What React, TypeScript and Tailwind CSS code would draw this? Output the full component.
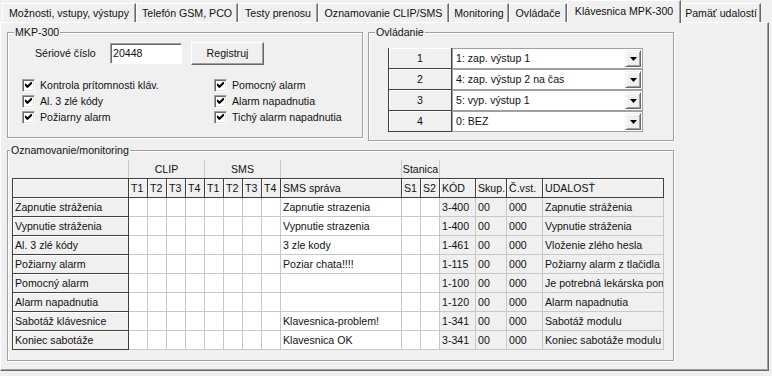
import React from "react";

const tabs = [
  { label: "Možnosti, vstupy, výstupy", w: "w-[134px]" },
  { label: "Telefón GSM, PCO", w: "w-[102px]" },
  { label: "Testy prenosu", w: "w-[80px]" },
  { label: "Oznamovanie CLIP/SMS", w: "w-[131px]" },
  { label: "Monitoring", w: "w-[60px]" },
  { label: "Ovládače", w: "w-[58px]" },
  { label: "Klávesnica MPK-300", w: "w-[114px]", active: true },
  { label: "Pamäť udalostí", w: "w-[80px]" },
];

const controls = [
  { n: "1", value: "1: zap. výstup 1" },
  { n: "2", value: "4: zap. výstup 2 na čas" },
  { n: "3", value: "5: vyp. výstup 1" },
  { n: "4", value: "0: BEZ" },
];

const headers = ["", "T1", "T2", "T3", "T4", "T1", "T2", "T3", "T4", "SMS správa", "S1", "S2", "KÓD", "Skup.", "Č.vst.", "UDALOSŤ"];

const events = [
  ["Zapnutie stráženia", "Zapnutie strazenia", "3-400", "Zapnutie stráženia"],
  ["Vypnutie stráženia", "Vypnutie strazenia", "1-400", "Vypnutie stráženia"],
  ["Al. 3 zlé kódy", "3 zle kody", "1-461", "Vloženie zlého hesla"],
  ["Požiarny alarm", "Poziar chata!!!!", "1-115", "Požiarny alarm z tlačidla"],
  ["Pomocný alarm", "", "1-100", "Je potrebná lekárska pomoc"],
  ["Alarm napadnutia", "", "1-120", "Alarm napadnutia"],
  ["Sabotáž klávesnice", "Klavesnica-problem!", "1-341", "Sabotáž modulu"],
  ["Koniec sabotáže", "Klavesnica OK", "3-341", "Koniec sabotáže modulu"],
];

function Group({ label, labelLeft, className, children }: { label: string; labelLeft: string; className: string; children: React.ReactNode }) {
  return (
    <div className={"relative border border-[#a0a0a0] shadow-[inset_1px_1px_0_#fff,1px_1px_0_#fff] " + className}>
      <span className={"absolute -top-[7px] bg-[#f0f0f0] px-[1px] leading-[13px] " + labelLeft}>{label}</span>
      {children}
    </div>
  );
}

function CheckBox({ label }: { label: string }) {
  return (
    <div className="flex h-[16px] items-center gap-[5px]">
      <span className="flex h-[13px] w-[13px] items-center justify-center border border-t-[#a0a0a0] border-l-[#a0a0a0] border-r-white border-b-white bg-white shadow-[inset_1px_1px_0_#696969,inset_-1px_-1px_0_#e3e3e3]">
        <svg width="7" height="7" viewBox="0 0 7 7">
          <polyline points="0.5,2.8 2.5,4.8 6.5,0.8" fill="none" stroke="#000" strokeWidth="2" strokeLinecap="square" />
        </svg>
      </span>
      <span>{label}</span>
    </div>
  );
}

function Combo({ value }: { value: string }) {
  return (
    <div className="flex h-[21px] w-[191px] items-center justify-between border border-[#a0a0a0] bg-white pl-[3px] pr-[1px]">
      <span>{value}</span>
      <span className="flex h-[17px] w-[16px] items-center justify-center border border-t-[#f0f0f0] border-l-[#f0f0f0] border-r-[#696969] border-b-[#696969] bg-[#f0f0f0] shadow-[inset_1px_1px_0_#fff,inset_-1px_-1px_0_#a0a0a0]">
        <svg width="7" height="4" viewBox="0 0 7 4">
          <path d="M0 0 H7 L3.5 4 Z" fill="#000" />
        </svg>
      </span>
    </div>
  );
}

export default function App() {
  const fixed = "flex items-center px-[2px] bg-[#f0f0f0] border-r border-b border-[#404040] shadow-[inset_1px_1px_0_#fff] whitespace-nowrap overflow-hidden";
  const cell = "flex items-center px-[2px] border-r border-b border-[#c8c8c8] whitespace-nowrap overflow-hidden";

  return (
    <div className="h-[376px] w-[772px] overflow-hidden bg-[#f0f0f0] font-['Liberation_Sans',Arial,sans-serif] text-[10.6px] leading-none text-[#111]">
      <div className="flex h-[22px] items-end pl-[2px]">
        {tabs.map((t) =>
          t.active ? (
            <div
              key={t.label}
              className={"relative z-10 -mb-[1px] flex h-[23px] items-center justify-center border-t border-l border-r border-t-white border-l-white border-r-[#696969] bg-[#f0f0f0] pb-[2px] shadow-[inset_-1px_0_0_#a0a0a0] " + t.w}
            >
              {t.label}
            </div>
          ) : (
            <div
              key={t.label}
              className={"flex h-[19px] items-center justify-center border-t border-l border-r border-t-white border-l-white border-r-[#696969] shadow-[inset_-1px_0_0_#a0a0a0] " + t.w}
            >
              {t.label}
            </div>
          )
        )}
      </div>

      <div className="h-[349px] w-[769px] border border-t-white border-l-white border-r-[#696969] border-b-[#696969] pl-[6px] pt-[9px] shadow-[inset_-1px_-1px_0_#a0a0a0]">
        <div className="flex items-start gap-[5px]">
          <Group label="MKP-300" labelLeft="left-[6px]" className="h-[106px] w-[356px]">
            <div className="mt-[9px] flex h-[23px] items-center pl-[27px]">
              <span className="w-[75px]">Sériové číslo</span>
              <div className="flex h-[21px] w-[72px] items-center border border-t-[#a0a0a0] border-l-[#a0a0a0] border-r-white border-b-white bg-white pl-[2px] shadow-[inset_1px_1px_0_#696969]">
                20448
              </div>
              <button className="ml-[9px] h-[23px] w-[73px] border border-t-white border-l-white border-r-[#696969] border-b-[#696969] bg-[#f0f0f0] shadow-[inset_-1px_-1px_0_#a0a0a0]">
                Registruj
              </button>
            </div>
            <div className="mt-[12px] grid grid-cols-[192px_1fr] pl-[14px]">
              <div className="flex flex-col">
                <CheckBox label="Kontrola prítomnosti kláv." />
                <CheckBox label="Al. 3 zlé kódy" />
                <CheckBox label="Požiarny alarm" />
              </div>
              <div className="flex flex-col">
                <CheckBox label="Pomocný alarm" />
                <CheckBox label="Alarm napadnutia" />
                <CheckBox label="Tichý alarm napadnutia" />
              </div>
            </div>
          </Group>

          <Group label="Ovládanie" labelLeft="left-[6px]" className="h-[109px] w-[306px]">
            <div className="ml-[19px] mt-[15px] flex flex-col">
              {controls.map((c) => (
                <div key={c.n} className="flex">
                  <div className="flex h-[21px] w-[64px] items-center justify-center border-l border-b border-r border-[#404040] bg-[#f0f0f0] shadow-[inset_1px_1px_0_#fff]">
                    {c.n}
                  </div>
                  <Combo value={c.value} />
                </div>
              ))}
            </div>
          </Group>
        </div>

        <Group label="Oznamovanie/monitoring" labelLeft="left-[2px]" className="mt-[9px] h-[211px] w-[667px]">
          <div className="ml-[4px] mt-[9px] grid w-[652px] grid-cols-[117px_19px_19px_19px_19px_19px_19px_19px_19px_121px_19px_19px_36px_31px_36px_121px]">
            <div className="h-[18px] border-r border-[#c8c8c8]" />
            <div className="col-span-4 flex h-[18px] items-center justify-center border-r border-[#c8c8c8]">CLIP</div>
            <div className="col-span-4 flex h-[18px] items-center justify-center border-r border-[#c8c8c8]">SMS</div>
            <div className="h-[18px] border-r border-[#c8c8c8]" />
            <div className="col-span-2 flex h-[18px] items-center justify-center border-r border-[#c8c8c8]">Stanica</div>
            <div className="col-span-4 h-[18px]" />

            {headers.map((h, i) => (
              <div key={"h" + i} className={fixed + " h-[20px] border-t" + (i === 0 ? " border-l" : "")}>
                {h}
              </div>
            ))}

            {events.map((e) => (
              <React.Fragment key={e[0]}>
                <div className={fixed + " h-[19px] border-l"}>{e[0]}</div>
                {Array.from({ length: 8 }).map((_, i) => (
                  <div key={i} className={cell + " bg-white"} />
                ))}
                <div className={cell + " bg-white"}>{e[1]}</div>
                <div className={cell + " bg-white"} />
                <div className={cell + " bg-white"} />
                <div className={cell}>{e[2]}</div>
                <div className={cell}>00</div>
                <div className={cell}>000</div>
                <div className={cell}>{e[3]}</div>
              </React.Fragment>
            ))}
          </div>
        </Group>
      </div>
    </div>
  );
}
